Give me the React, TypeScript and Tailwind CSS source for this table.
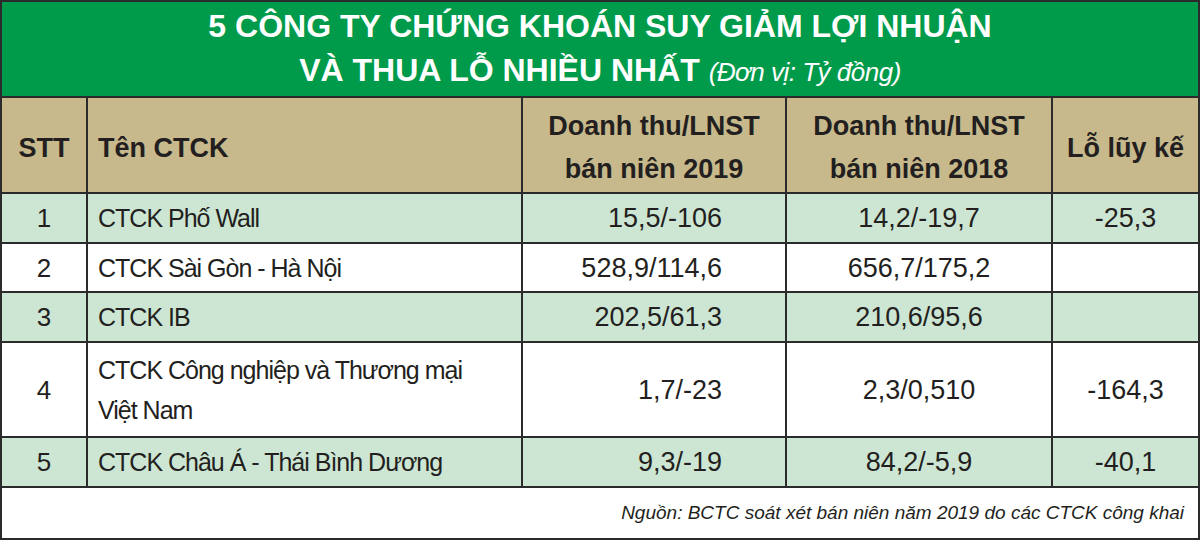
import React from "react";

const FONT = "font-['Liberation_Sans',Arial,sans-serif]";

type Row = { stt: string; name: React.ReactNode; a: string; b: string; c: string; green: boolean; h: string };

const rows: Row[] = [
  { stt: "1", name: "CTCK Phố Wall", a: "15,5/-106", b: "14,2/-19,7", c: "-25,3", green: true, h: "h-[50px]" },
  { stt: "2", name: "CTCK Sài Gòn - Hà Nội", a: "528,9/114,6", b: "656,7/175,2", c: "", green: false, h: "h-[49px]" },
  { stt: "3", name: "CTCK IB", a: "202,5/61,3", b: "210,6/95,6", c: "", green: true, h: "h-[50px]" },
  {
    stt: "4",
    name: (
      <>
        CTCK Công nghiệp và Thương mại
        <br />
        Việt Nam
      </>
    ),
    a: "1,7/-23",
    b: "2,3/0,510",
    c: "-164,3",
    green: false,
    h: "h-[95px]",
  },
  { stt: "5", name: "CTCK Châu Á - Thái Bình Dương", a: "9,3/-19", b: "84,2/-5,9", c: "-40,1", green: true, h: "h-[50px]" },
];

const cell = "border-2 border-[#2b2b2b]";

export default function App() {
  return (
    <div className={`w-[1200px] h-[540px] bg-white text-[#231f20] ${FONT}`}>
      <table className="w-[1198px] table-fixed border-collapse border-2 border-[#2b2b2b]">
        <colgroup>
          <col className="w-[86px]" />
          <col className="w-[435px]" />
          <col className="w-[264px]" />
          <col className="w-[266px]" />
          <col className="w-[147px]" />
        </colgroup>
        <tbody>
          <tr className="h-[96px] bg-[#009a4b]">
            <td colSpan={5} className={`${cell} p-0 text-center text-white`}>
              <div className="text-[32px] font-bold leading-[44px]">5 CÔNG TY CHỨNG KHOÁN SUY GIẢM LỢI NHUẬN</div>
              <div className="text-[32px] font-bold leading-[44px]">
                VÀ THUA LỖ NHIỀU NHẤT{" "}
                <span className="text-[26px] font-normal italic tracking-[-0.5px]">(Đơn vị: Tỷ đồng)</span>
              </div>
            </td>
          </tr>
          <tr className="h-[96px] bg-[#c7b98b] text-[27px] font-bold leading-[43px]">
            <td className={`${cell} p-0 pt-[6px] text-center`}>STT</td>
            <td className={`${cell} py-0 pt-[6px] pl-[10px] text-left`}>Tên CTCK</td>
            <td className={`${cell} p-0 pt-[6px] text-center`}>
              Doanh thu/LNST
              <br />
              bán niên 2019
            </td>
            <td className={`${cell} p-0 pt-[6px] text-center`}>
              Doanh thu/LNST
              <br />
              bán niên 2018
            </td>
            <td className={`${cell} p-0 pt-[6px] text-center`}>Lỗ lũy kế</td>
          </tr>
          {rows.map((r) => (
            <tr key={r.stt} className={`${r.h} ${r.green ? "bg-[#cde6d4]" : "bg-white"} leading-[40px]`}>
              <td className={`${cell} p-0 text-center text-[26px]`}>{r.stt}</td>
              <td className={`${cell} py-0 pl-[10px] text-left text-[25px] tracking-[-1px]`}>{r.name}</td>
              <td className={`${cell} py-0 pr-[63px] text-right text-[27px]`}>{r.a}</td>
              <td className={`${cell} p-0 text-center text-[27px]`}>{r.b}</td>
              <td className={`${cell} p-0 text-center text-[27px]`}>{r.c}</td>
            </tr>
          ))}
          <tr className="h-[52px] bg-white">
            <td colSpan={5} className={`${cell} py-0 pr-[14px] text-right text-[19px] italic`}>
              Nguồn: BCTC soát xét bán niên năm 2019 do các CTCK công khai
            </td>
          </tr>
        </tbody>
      </table>
    </div>
  );
}
